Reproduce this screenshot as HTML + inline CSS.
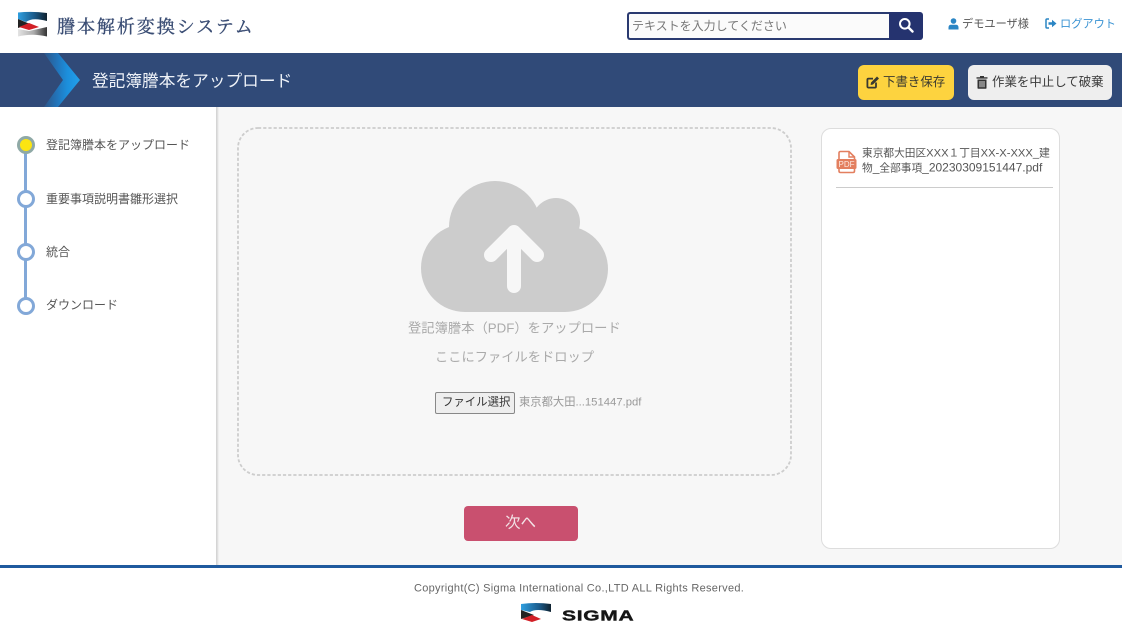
<!DOCTYPE html>
<html lang="ja"><head><meta charset="utf-8"><title>謄本解析変換システム</title>
<style>
html,body{margin:0;padding:0}
body{width:1122px;height:622px;position:relative;overflow:hidden;background:#fff;font-family:"Liberation Sans","Noto Sans CJK JP",sans-serif}
.a{position:absolute;white-space:nowrap}
.t{line-height:1;transform:translateY(-50%)}
.l{font-size:11.2px}
</style></head><body>
<!-- header -->
<svg class="a" style="left:16px;top:10px" width="34" height="30" viewBox="16 10 34 30">
<defs>
<linearGradient id="b" x1="0" x2="1"><stop offset="0" stop-color="#2f9fe0"/><stop offset=".55" stop-color="#1b5c8c"/><stop offset="1" stop-color="#10222f"/></linearGradient>
<linearGradient id="g" x1="0" x2="1"><stop offset="0" stop-color="#e4e4e4"/><stop offset=".55" stop-color="#aaa"/><stop offset="1" stop-color="#333"/></linearGradient>
</defs>
<path d="M18 12.5Q32 11 47 13V20L47 21Q32 17 26 22L18 19Z" fill="url(#b)"/>
<path d="M18 19L30 24 18 28Z" fill="#222"/>
<path d="M19 27L29 23 39 27 29 30Z" fill="#d21f26"/>
<path d="M18 29L29 31 47 27V36.5Q32 33 18 36.5Z" fill="url(#g)"/>
</svg>
<div class="a t" style="left:57px;top:27px;font:18px/1 'Liberation Serif','Noto Serif CJK JP',serif;letter-spacing:1.95px;color:#3a4d74;-webkit-text-stroke:.35px #3a4d74">謄本解析変換システム</div>
<div class="a" style="left:627px;top:12px;width:262px;height:27.5px;box-sizing:border-box;border:2px solid #2a3a70;border-right:0;border-radius:3px 0 0 3px;background:#fbfbfb"></div>
<div class="a t" style="left:632px;top:26px;font-size:12px;color:#777">テキストを入力してください</div>
<div class="a" style="left:889px;top:12px;width:34px;height:27.5px;background:#25336f;border-radius:0 3px 3px 0"></div>
<svg class="a" style="left:898px;top:17px" width="16" height="16" viewBox="0 0 16 16"><circle cx="6.8" cy="6.8" r="4.8" fill="none" stroke="#fff" stroke-width="2"/><path d="M10.5 10.5L14.5 14.5" stroke="#fff" stroke-width="2.4" stroke-linecap="round"/></svg>
<svg class="a" style="left:948px;top:18px" width="11" height="12" viewBox="0 0 11 12"><circle cx="5.5" cy="3" r="2.8" fill="#2a85c4"/><path d="M0.5 11.5V9.5Q0.5 6.7 3 6.7H8Q10.5 6.7 10.5 9.5V11.5Z" fill="#2a85c4"/></svg>
<div class="a t" style="left:962px;top:25px;font-size:11.2px;color:#555">デモユーザ様</div>
<svg class="a" style="left:1045px;top:18px" width="12" height="11" viewBox="0 0 12 11"><path d="M4 1H2Q1 1 1 2V9Q1 10 2 10H4" fill="none" stroke="#2a85c4" stroke-width="1.5"/><path d="M3.5 4.2H7V1.8L11.5 5.5 7 9.2V6.8H3.5Z" fill="#2a85c4"/></svg>
<div class="a t" style="left:1060px;top:25px;font-size:11.2px;color:#3a93d3">ログアウト</div>
<!-- banner -->
<div class="a" style="left:0;top:53px;width:1122px;height:54px;background:#304a78"></div>
<svg class="a" style="left:40px;top:53px" width="45" height="54" viewBox="40 53 45 54">
<defs><linearGradient id="c" x1="0" x2="1"><stop offset="0" stop-color="#2d5588"/><stop offset=".35" stop-color="#2273b8"/><stop offset=".65" stop-color="#1c8fdc"/><stop offset="1" stop-color="#22a0ea"/></linearGradient></defs>
<path d="M44 53H58L80 80 58 107H44L63 80Z" fill="url(#c)"/></svg>
<div class="a t" style="left:92px;top:81.5px;font-size:16.7px;color:#eef2f8">登記簿謄本をアップロード</div>
<div class="a" style="left:858px;top:65px;width:96px;height:35px;background:#fdd33f;border-radius:6px"></div>
<svg class="a" style="left:866px;top:75px" width="14" height="14" viewBox="0 0 14 14"><path d="M10 7.5V11.5Q10 12.6 9 12.6H2.4Q1.4 12.6 1.4 11.5V4.6Q1.4 3.6 2.4 3.6H7" fill="none" stroke="#3a3a30" stroke-width="1.8"/><path d="M5 7.5L11 1.5 13 3.5 7 9.5 4.6 10Z" fill="#3a3a30"/></svg>
<div class="a t" style="left:883px;top:82px;font-size:12.45px;color:#3a3a30">下書き保存</div>
<div class="a" style="left:968px;top:65px;width:144px;height:35px;background:#eee;border-radius:6px"></div>
<svg class="a" style="left:976px;top:75px" width="12" height="14" viewBox="0 0 12 14"><path d="M0.5 2.2H11.5V3.6H0.5ZM4 1H8V2.5H4Z" fill="#333"/><path d="M1.5 4.5H10.5V13Q10.5 13.8 9.7 13.8H2.3Q1.5 13.8 1.5 13Z" fill="#333"/><path d="M4 6V12.3M6 6V12.3M8 6V12.3" stroke="#eee" stroke-width=".9"/></svg>
<div class="a t" style="left:992px;top:82px;font-size:12.45px;color:#3a3a3a">作業を中止して破棄</div>
<!-- main -->
<div class="a" style="left:0;top:107px;width:1122px;height:459px;background:#f7f7f7"></div>
<div class="a" style="left:216px;top:107px;width:3px;height:459px;background:linear-gradient(90deg,#cfcfcf,#e4e4e4 60%,#f7f7f7)"></div>
<div class="a" style="left:0;top:107px;width:216px;height:459px;background:#fff"></div>
<div class="a" style="left:24px;top:145px;width:3px;height:161px;background:#82a8d8"></div>
<div class="a" style="left:17px;top:136px;width:18px;height:18px;box-sizing:border-box;border:3px solid #8fa9a6;border-radius:50%;background:#fce512"></div>
<div class="a" style="left:17px;top:190px;width:18px;height:18px;box-sizing:border-box;border:3.5px solid #82a8d8;border-radius:50%;background:#fff"></div>
<div class="a" style="left:17px;top:243px;width:18px;height:18px;box-sizing:border-box;border:3.5px solid #82a8d8;border-radius:50%;background:#fff"></div>
<div class="a" style="left:17px;top:297px;width:18px;height:18px;box-sizing:border-box;border:3.5px solid #82a8d8;border-radius:50%;background:#fff"></div>
<div class="a t" style="left:46px;top:144.5px;font-size:12px;color:#555">登記簿謄本をアップロード</div>
<div class="a t" style="left:46px;top:198.5px;font-size:12px;color:#555">重要事項説明書雛形選択</div>
<div class="a t" style="left:46px;top:252px;font-size:12px;color:#555">統合</div>
<div class="a t" style="left:46px;top:305px;font-size:12px;color:#555">ダウンロード</div>
<!-- drop zone -->
<svg class="a" style="left:236px;top:126px" width="558" height="352" viewBox="236 126 558 352"><rect x="238" y="128" width="553" height="347" rx="20" fill="none" stroke="#cdcdcd" stroke-width="1.8" stroke-dasharray="3.2 2"/></svg>
<svg class="a" style="left:415px;top:175px" width="200" height="145" viewBox="415 175 200 145">
<g fill="#ccc"><circle cx="495" cy="227" r="46"/><circle cx="556" cy="222" r="24"/><circle cx="465" cy="268" r="44"/><circle cx="565" cy="269" r="43"/><rect x="465" y="225" width="100" height="87"/></g>
<path d="M514 286V234M491 255L514 232 537 255" fill="none" stroke="#f7f7f7" stroke-width="14" stroke-linecap="round" stroke-linejoin="round"/></svg>
<div class="a t" style="left:408px;top:327.5px;font-size:13.3px;color:#aaa">登記簿謄本（PDF）をアップロード</div>
<div class="a t" style="left:435px;top:357px;font-size:13.25px;color:#aaa">ここにファイルをドロップ</div>
<div class="a" style="left:435px;top:392px;width:80px;height:22px;box-sizing:border-box;border:1px solid #888;border-radius:2px;background:#eee"></div>
<div class="a t" style="left:442px;top:402.5px;font-size:11.4px;color:#333">ファイル選択</div>
<div class="a t" style="left:519px;top:402.5px;font-size:11.3px;color:#999">東京都大田...151447.pdf</div>
<div class="a" style="left:464px;top:506px;width:114px;height:35px;background:#c9506f;border-radius:4px"></div>
<div class="a t" style="left:505px;top:523px;font-size:15.5px;color:#f3e4e8">次へ</div>
<!-- right panel -->
<div class="a" style="left:821px;top:128px;width:239px;height:421px;box-sizing:border-box;background:#fff;border:1px solid #ddd;border-radius:10px"></div>
<svg class="a" style="left:836px;top:150px" width="21" height="24" viewBox="0 0 21 24"><path d="M3 9V3Q3 1.5 4.5 1.5H13L18.5 7V9M3 19V21Q3 22.5 4.5 22.5H17Q18.5 22.5 18.5 21V19" fill="none" stroke="#e37f5f" stroke-width="1.6"/><path d="M13 1.5V7H18.5" fill="none" stroke="#e37f5f" stroke-width="1.4"/><rect x="0.5" y="9" width="20" height="10" rx="1.5" fill="#e37f5f"/><text x="10.5" y="17" text-anchor="middle" font-family="Liberation Sans" font-size="8" fill="#fde8e0">PDF</text></svg>
<div class="a t" style="left:862px;top:154px;font-size:10.7px;color:#555">東京都大田区<span class="l">XXX</span>１丁目<span class="l">XX-X-XXX_</span>建</div>
<div class="a t" style="left:862px;top:168px;font-size:10.7px;color:#555">物<span style="font-size:12px">_</span>全部事項<span style="font-size:12px">_20230309151447.pdf</span></div>
<div class="a" style="left:836px;top:187px;width:217px;height:1px;background:#ccc"></div>
<!-- footer -->
<div class="a" style="left:0;top:565px;width:1122px;height:3px;background:#1f5a9e"></div>
<div class="a t" style="left:414px;top:589px;font-size:11px;letter-spacing:.29px;color:#666">Copyright(C) Sigma International Co.,LTD ALL Rights Reserved.</div>
<svg class="a" style="left:520px;top:602px" width="32" height="20" viewBox="520 602 32 20">
<defs><linearGradient id="b2" x1="0" x2="1"><stop offset="0" stop-color="#2f9fe0"/><stop offset=".6" stop-color="#1b5c8c"/><stop offset="1" stop-color="#10222f"/></linearGradient></defs>
<path d="M521 604Q536 602 551 604V612Q536 608 530 612L521 610Z" fill="url(#b2)"/>
<path d="M521 610L534 615 521 619Z" fill="#222"/>
<path d="M522 619L532 615 541 619 532 622Z" fill="#d21f26"/></svg>
<div class="a t" style="left:562px;top:616px;font:900 15px/1 'Liberation Sans',sans-serif;color:#151515;letter-spacing:.5px;transform:translateY(-50%) scaleX(1.4);transform-origin:left center;-webkit-text-stroke:.4px #151515">SIGMA</div>
</body></html>
